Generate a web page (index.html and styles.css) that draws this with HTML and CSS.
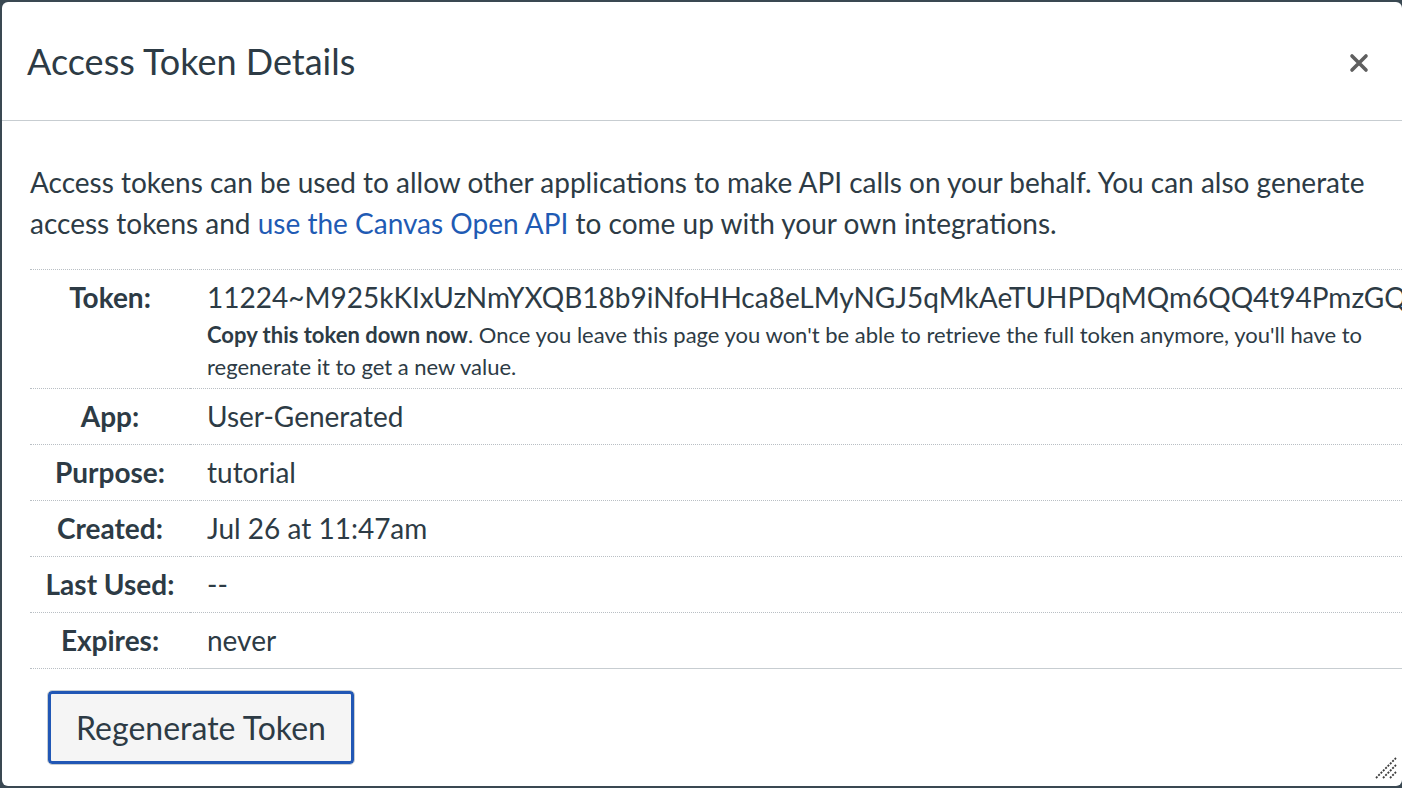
FILE: index.html
```html
<!DOCTYPE html>
<html lang="en">
<head>
<meta charset="utf-8">
<title>Access Token Details</title>
<link rel="stylesheet" href="styles.css">
</head>
<body>
<div class="modal">
  <div class="modal-header">
    <h1 class="modal-title">Access Token Details</h1>
    <button class="close-btn" aria-label="Close">
      <svg width="20" height="20" viewBox="0 0 20 20"><path d="M3 3 L17 17 M17 3 L3 17" stroke="#5f5f5f" stroke-width="3.6" stroke-linecap="round" fill="none"/></svg>
    </button>
  </div>
  <div class="modal-body">
    <p class="intro">Access tokens can be used to allow other applications to make API calls on your behalf. You can also generate access tokens and <a href="#" class="link">use the Canvas Open API</a> to come up with your own integrations.</p>
    <table class="details">
      <colgroup><col class="col-label"><col></colgroup>
      <tbody>
        <tr>
          <th>Token:</th>
          <td class="token-cell">
            <div class="token">11224~M925kKIxUzNmYXQB18b9iNfoHHca8eLMyNGJ5qMkAeTUHPDqMQm6QQ4t94PmzGQ</div>
            <div class="note"><b>Copy this token down now</b>. Once you leave this page you won't be able to retrieve the full token anymore, you'll have to regenerate it to get a new value.</div>
          </td>
        </tr>
        <tr><th>App:</th><td>User-Generated</td></tr>
        <tr><th>Purpose:</th><td>tutorial</td></tr>
        <tr><th>Created:</th><td>Jul 26 at 11:47am</td></tr>
        <tr><th>Last Used:</th><td>--</td></tr>
        <tr class="last"><th>Expires:</th><td>never</td></tr>
      </tbody>
    </table>
    <div class="actions">
      <button class="btn">Regenerate Token</button>
    </div>
  </div>
  <div class="resize-handle">
    <svg width="24" height="24" viewBox="0 0 24 24"><g stroke="#3c3c3c" stroke-width="1.8" stroke-dasharray="2 1.3" fill="none"><path d="M2 22 L22 2"/><path d="M9 22 L22 9"/><path d="M16 22 L22 16"/></g></svg>
  </div>
</div>
</body>
</html>
```
FILE: styles.css
```css
html, body {
  margin: 0;
  padding: 0;
}
body {
  background: #3a4852;
  font-family: Lato, "Open Sans", "Liberation Sans", sans-serif;
  color: #2d3b45;
  width: 1402px;
  height: 788px;
  overflow: hidden;
}
.modal {
  position: relative;
  margin: 2px 0 0 2px;
  width: 1400px;
  height: 784px;
  background: #fff;
  border-radius: 6px;
  overflow: hidden;
}
.modal-header {
  height: 118px;
  border-bottom: 1px solid #c7cdd1;
  display: flex;
  align-items: center;
  justify-content: space-between;
  padding: 0 33px 0 25px;
}
.modal-title {
  margin: 0;
  font-size: 36px;
  font-weight: 400;
  color: #2d3b45;
}
.close-btn {
  background: none;
  border: 0;
  padding: 0;
  width: 20px;
  height: 20px;
  display: flex;
  margin-top: 4px;
}
.modal-body {
  padding: 41px 30px 0 28px;
}
.intro {
  margin: 0;
  font-size: 28px;
  line-height: 41px;
}
.link {
  color: #1f5bb4;
  text-decoration: none;
}
.details {
  margin-top: 25px;
  width: calc(100% + 30px);
  table-layout: fixed;
  border-collapse: collapse;
  border-top: 1px dotted #b9bfc4;
  font-size: 28px;
}
.col-label {
  width: 160px;
}
.details th,
.details td {
  border-bottom: 1px dotted #b9bfc4;
  padding: 9px 18px 9px 17px;
  line-height: 37px;
  vertical-align: top;
  text-align: left;
}
.details th {
  text-align: center;
  font-weight: 700;
  padding: 9px 0;
}
.details td.token-cell {
  padding-top: 9px;
  padding-bottom: 5px;
}
.details tr.last td {
  border-bottom: 1px solid #c7cdd1;
}
.token {
  white-space: nowrap;
}
.note {
  font-size: 22px;
  line-height: 32px;
  margin-top: 3px;
}
.note b {
  font-weight: 700;
}
.actions {
  padding-top: 21px;
  padding-left: 17px;
}
.btn {
  font-family: Lato, "Open Sans", "Liberation Sans", sans-serif;
  font-size: 32px;
  color: #2d3b45;
  background: #f5f5f5;
  border: 1px solid #c7cdd1;
  border-radius: 5px;
  box-shadow: inset 0 0 0 3px #2157b5;
  width: 308px;
  height: 75px;
  padding: 0;
}
.resize-handle {
  position: absolute;
  right: 4px;
  bottom: 6px;
  width: 24px;
  height: 24px;
}
```
